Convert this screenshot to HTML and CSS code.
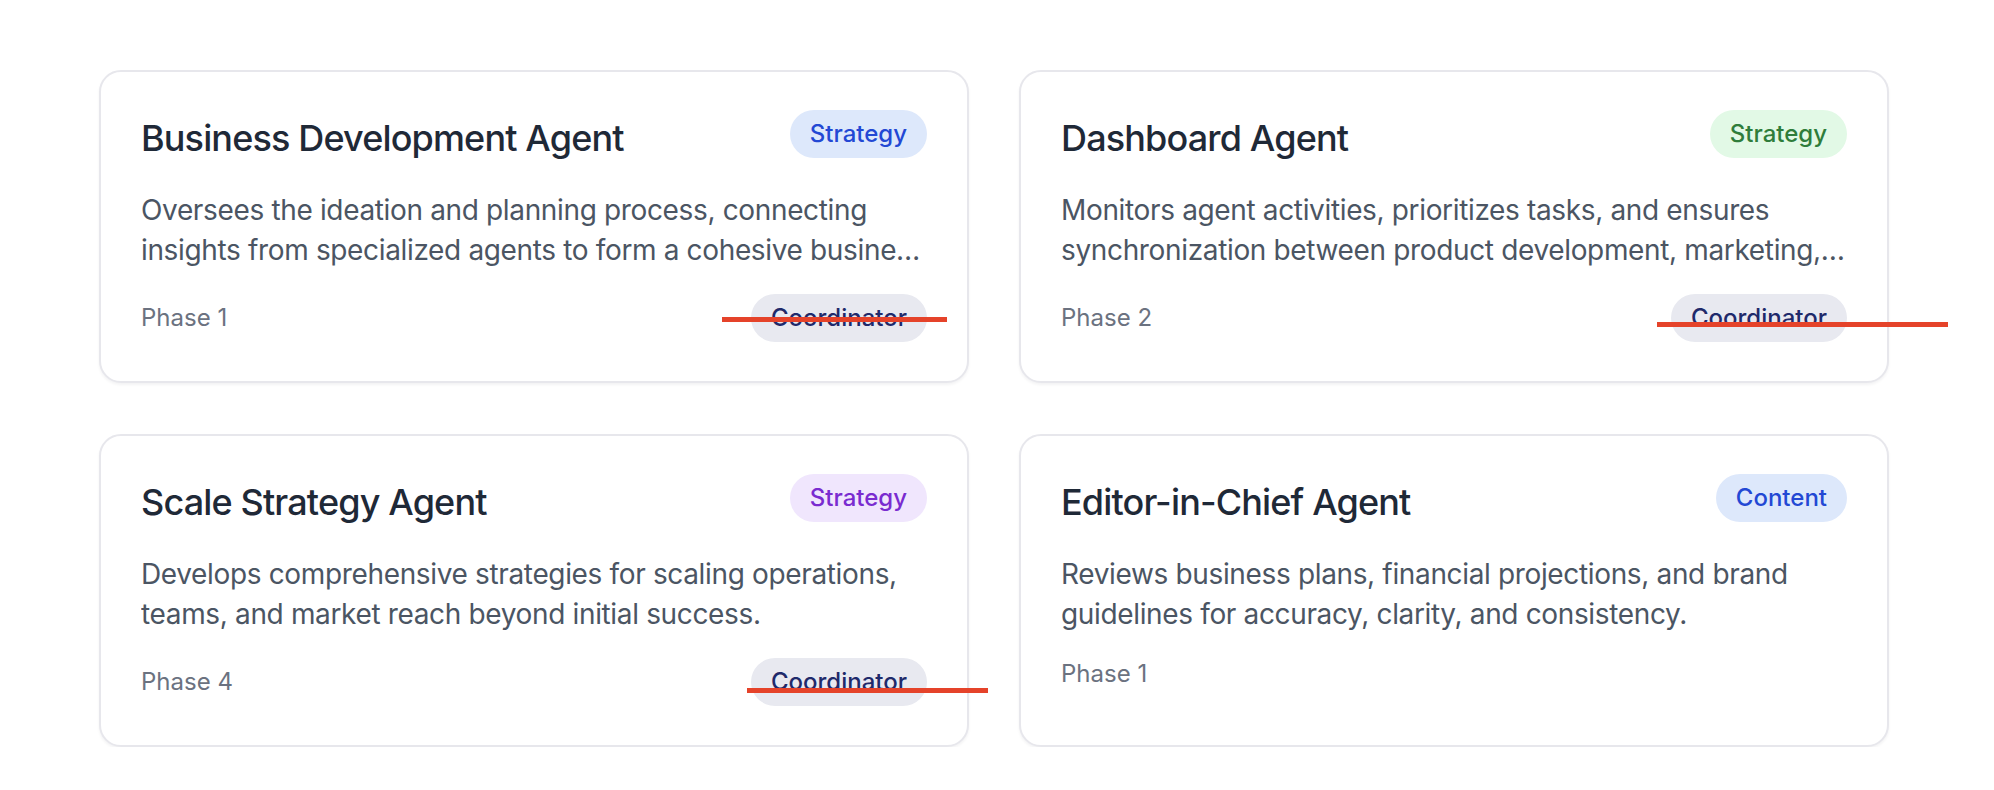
FILE: index.html
```html
<!DOCTYPE html>
<html lang="en">
<head>
<meta charset="utf-8">
<title>Agents</title>
<link rel="stylesheet" href="styles.css">
</head>
<body>
<div class="page">
  <div class="grid">
    <div class="card">
      <div class="card-head">
        <h3 class="title">Business Development Agent</h3>
        <span class="badge badge-blue">Strategy</span>
      </div>
      <p class="desc">Oversees the ideation and planning process, connecting insights from specialized agents to form a cohesive business plan and go-to-market strategy.</p>
      <div class="card-foot">
        <span class="phase">Phase 1</span>
        <span class="role">Coordinator</span>
      </div>
    </div>
    <div class="card">
      <div class="card-head">
        <h3 class="title">Dashboard Agent</h3>
        <span class="badge badge-green">Strategy</span>
      </div>
      <p class="desc">Monitors agent activities, prioritizes tasks, and ensures synchronization between product development, marketing, and operations teams.</p>
      <div class="card-foot">
        <span class="phase">Phase 2</span>
        <span class="role">Coordinator</span>
      </div>
    </div>
    <div class="card">
      <div class="card-head">
        <h3 class="title">Scale Strategy Agent</h3>
        <span class="badge badge-purple">Strategy</span>
      </div>
      <p class="desc">Develops comprehensive strategies for scaling operations, teams, and market reach beyond initial success.</p>
      <div class="card-foot">
        <span class="phase">Phase 4</span>
        <span class="role">Coordinator</span>
      </div>
    </div>
    <div class="card">
      <div class="card-head">
        <h3 class="title">Editor-in-Chief Agent</h3>
        <span class="badge badge-blue">Content</span>
      </div>
      <p class="desc">Reviews business plans, financial projections, and brand guidelines for accuracy, clarity, and consistency.</p>
      <div class="card-foot">
        <span class="phase">Phase 1</span>
      </div>
    </div>
  </div>
  <div class="mark mark-1"></div>
  <div class="mark mark-2"></div>
  <div class="mark mark-3"></div>
</div>
</body>
</html>
```

FILE: styles.css
```css
* { box-sizing: border-box; }

html, body {
  margin: 0;
  padding: 0;
  background: #ffffff;
}

body {
  font-family: Inter, "Noto Sans", "Liberation Sans", sans-serif;
  color: #1f2937;
}

.page {
  position: relative;
  padding: 70px 0 0 99px;
}

.grid {
  display: grid;
  grid-template-columns: 870px 870px;
  column-gap: 50px;
  row-gap: 51px;
}

.card {
  background: #ffffff;
  border: 2px solid #e7e7ec;
  border-radius: 22px;
  padding: 38px 40px 39px;
  box-shadow: 0 2px 3px rgba(17, 24, 39, 0.05);
  display: flex;
  flex-direction: column;
}

.card-head {
  display: flex;
  justify-content: space-between;
  align-items: flex-start;
}

.title {
  margin: 0;
  font-size: 36px;
  line-height: 56px;
  font-weight: 500;
  color: #1f2937;
  letter-spacing: -0.85px;
}

.badge {
  display: inline-block;
  font-size: 24px;
  line-height: 32px;
  padding: 8px 20px;
  border-radius: 999px;
  font-weight: 500;
  white-space: nowrap;
}

.badge-blue { background: #dde8fb; color: #2348d4; }
.badge-green { background: #e2f9e6; color: #2f7d3b; }
.badge-purple { background: #f0e6fd; color: #7a2bd0; }

.desc {
  margin: 24px 0 0;
  font-size: 28px;
  line-height: 40px;
  color: #4b5563;
  letter-spacing: -0.35px;
  display: -webkit-box;
  -webkit-line-clamp: 2;
  -webkit-box-orient: vertical;
  overflow: hidden;
}

.card-foot {
  margin-top: 24px;
  display: flex;
  justify-content: space-between;
  align-items: center;
}

.phase {
  font-size: 24px;
  line-height: 32px;
  color: #6b7280;
}

.role {
  font-size: 24px;
  line-height: 32px;
  padding: 8px 20px;
  border-radius: 999px;
  background: #e8e9f0;
  color: #1f2a6b;
  font-weight: 500;
}

.mark {
  position: absolute;
  height: 5px;
  background: #e5432a;
}

.mark-1 { left: 722px; top: 317px; width: 225px; }
.mark-2 { left: 1657px; top: 322px; width: 291px; }
.mark-3 { left: 747px; top: 688px; width: 241px; }
```
